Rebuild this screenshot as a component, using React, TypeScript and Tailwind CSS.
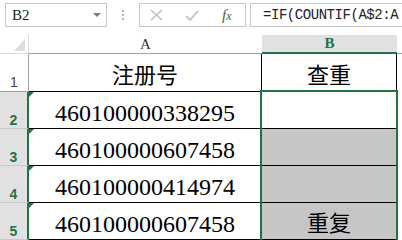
import React from "react";

const rows = [
  { n: "2", value: "460100000338295", check: "", shaded: false },
  { n: "3", value: "460100000607458", check: "", shaded: true },
  { n: "4", value: "460100000414974", check: "", shaded: true },
  { n: "5", value: "460100000607458", check: "重复", shaded: true },
];

function ErrorMark() {
  return (
    <svg className="absolute left-0 top-0" width="5" height="5" viewBox="0 0 5 5">
      <polygon points="0,0 5,0 0,5" fill="#217346" />
    </svg>
  );
}

export default function App() {
  return (
    <div className="relative h-[240px] w-[402px] overflow-hidden bg-white text-black">
      {/* formula bar */}
      <div className="flex h-[35px] items-start pl-[5px] pt-[3px]">
        <div className="flex h-[24px] w-[102px] items-center justify-between border border-[#c6c6c6] pl-[6px] pr-[5px]">
          <span className="[font-family:'Liberation_Serif',serif] text-[15px] leading-none text-[#222]">B2</span>
          <svg width="8" height="4" viewBox="0 0 8 4">
            <polygon points="0,0 8,0 4,4" fill="#7a7a7a" />
          </svg>
        </div>
        <div className="flex h-[24px] w-[32px] flex-col items-center justify-center gap-[2px]">
          <span className="h-[2px] w-[2px] bg-[#b5b5b5]" />
          <span className="h-[2px] w-[2px] bg-[#b5b5b5]" />
          <span className="h-[2px] w-[2px] bg-[#b5b5b5]" />
        </div>
        <div className="flex h-[24px] w-[107px] items-center border border-[#c6c6c6] pl-[10px]">
          <svg width="13" height="12" viewBox="0 0 13 12">
            <path d="M1 1 L12 11 M12 1 L1 11" stroke="#bdbdbd" strokeWidth="1.4" fill="none" />
          </svg>
          <svg className="ml-[22px]" width="14" height="11" viewBox="0 0 14 11">
            <path d="M1 6 L5 10 L13 1" stroke="#c9c9c9" strokeWidth="2" fill="none" />
          </svg>
          <span className="ml-[23px] [font-family:'Liberation_Serif',serif] text-[15px] italic leading-none text-[#555]">
            f<span className="text-[12px]">x</span>
          </span>
        </div>
        <div className="ml-[4px] flex h-[24px] flex-1 items-center border border-r-0 border-[#c6c6c6] pl-[12px]">
          <span className="whitespace-nowrap [font-family:'Liberation_Mono',monospace] text-[14px] tracking-[-0.45px] leading-none text-[#222]">
            =IF(COUNTIF(A$2:A
          </span>
        </div>
      </div>

      {/* sheet */}
      <div className="grid grid-cols-[29px_233px_135px_5px] grid-rows-[19px_38px_37px_37px_37px_37px]">
        {/* header row */}
        <div className="relative border-b border-r border-[#d9d9d9]">
          <svg className="absolute bottom-[2px] right-[3px]" width="11" height="12" viewBox="0 0 11 12">
            <polygon points="11,0 11,12 0,12" fill="#dcdcdc" />
          </svg>
        </div>
        <div className="flex items-center justify-center border-b border-[#a0a0a0] [font-family:'Liberation_Serif',serif] text-[15px] leading-none text-[#333]">
          A
        </div>
        <div className="flex items-center justify-center border-b-2 border-[#217346] bg-[#e1e1e1] [font-family:'Liberation_Serif',serif] text-[15px] font-bold leading-none text-[#217346]">
          B
        </div>
        <div className="border-b border-[#a0a0a0]" />

        {/* row 1 */}
        <div className="flex items-end justify-center border-b border-r border-[#a0a0a0] pb-[2px] [font-family:'Liberation_Sans',sans-serif] text-[14px] leading-none text-[#444]">
          1
        </div>
        <div className="flex items-end justify-center border-b border-r border-black pb-[4px] [font-family:'Liberation_Serif','Noto_Sans_CJK_SC',sans-serif] text-[22px] leading-none">
          注册号
        </div>
        <div className="flex items-end justify-center border-b border-r border-black pb-[4px] [font-family:'Liberation_Serif','Noto_Sans_CJK_SC',sans-serif] text-[22px] leading-none">
          查重
        </div>
        <div />

        {rows.map((r) => (
          <React.Fragment key={r.n}>
            <div className="flex items-end justify-center border-b border-r-2 border-b-[#c8c8c8] border-r-[#217346] bg-[#e1e1e1] pb-[1px] [font-family:'Liberation_Sans',sans-serif] text-[14px] font-semibold leading-none text-[#217346]">
              {r.n}
            </div>
            <div className="relative flex items-end justify-center border-b border-r border-black pb-[3px] [font-family:'Liberation_Serif',serif] text-[24px] leading-none">
              <ErrorMark />
              {r.value}
            </div>
            <div
              className={`flex items-end justify-center border-b border-r border-black pb-[4px] [font-family:'Liberation_Serif','Noto_Sans_CJK_SC',sans-serif] text-[22px] leading-none ${
                r.shaded ? "bg-[#c6c6c6]" : "bg-white"
              }`}
            >
              {r.check}
            </div>
            <div />
          </React.Fragment>
        ))}
      </div>

      {/* selection B2:B5 */}
      <div className="pointer-events-none absolute left-[260px] top-[90px] h-[160px] w-[138px] border-2 border-[#217346]" />
    </div>
  );
}
